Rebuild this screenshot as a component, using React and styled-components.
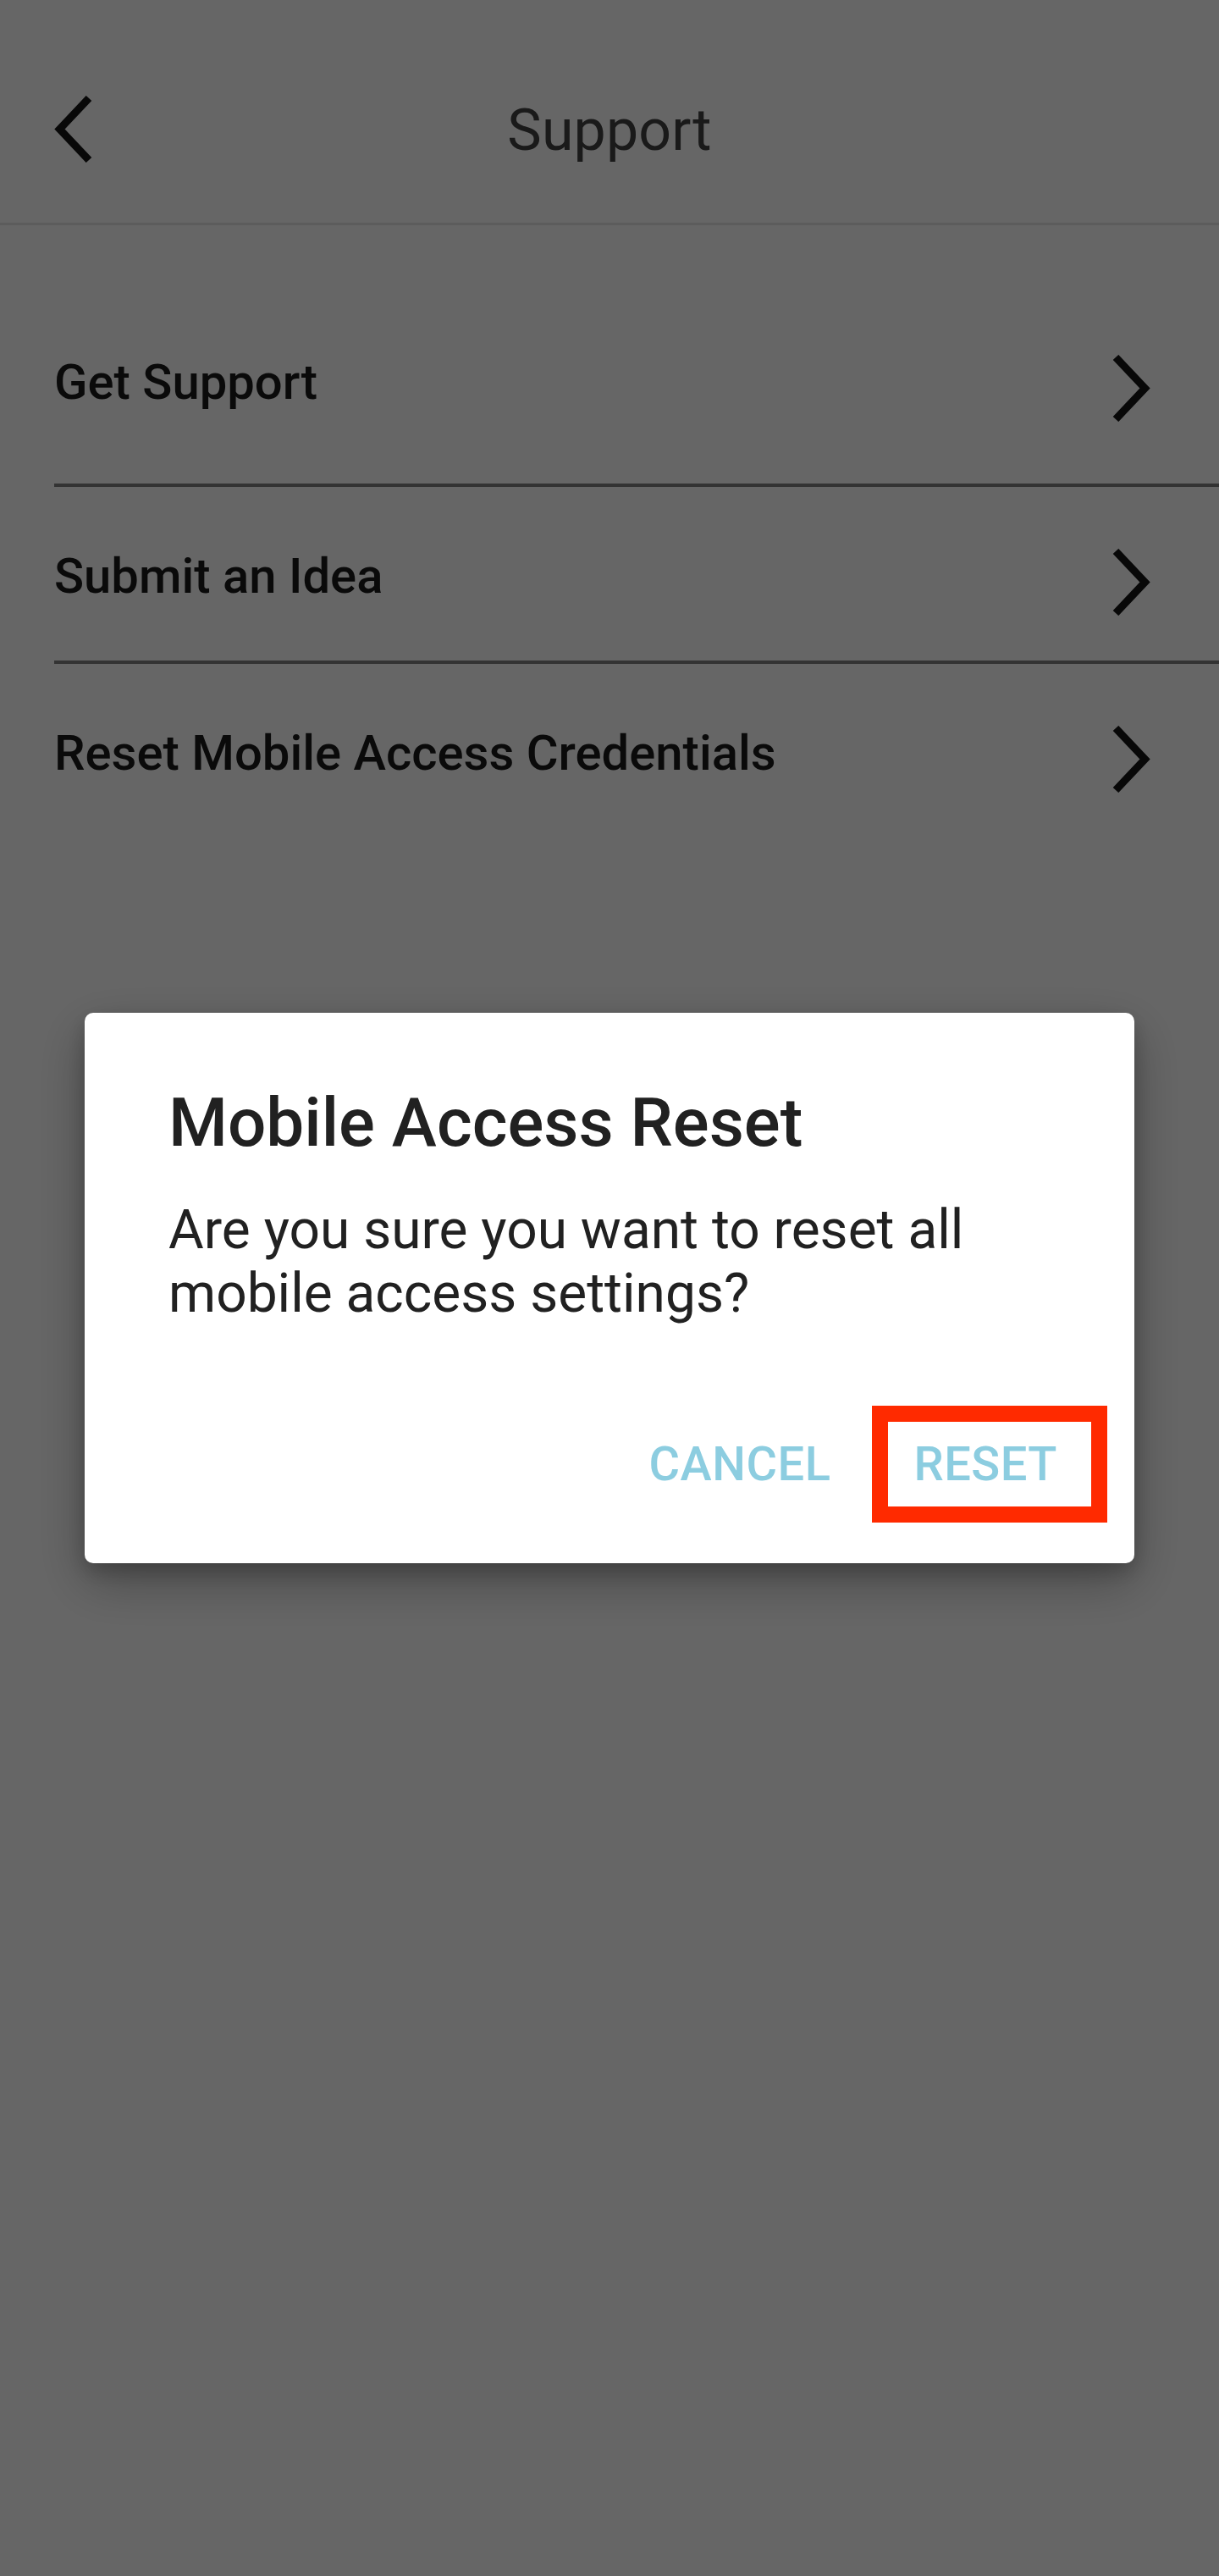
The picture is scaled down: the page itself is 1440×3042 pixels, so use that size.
import React from 'react';
import styled, {createGlobalStyle} from 'styled-components';

const GlobalStyle = createGlobalStyle`
  html, body {
    margin: 0;
    padding: 0;
    background: #ffffff;
  }
  body {
    font-family: Roboto, "Noto Sans", "Liberation Sans", sans-serif;
    -webkit-font-smoothing: antialiased;
  }
  #root {
    min-height: 100vh;
  }
`

const Page = styled.div`
  min-height: 100vh;
  background: #ffffff;
`

const Header = styled.header`
  position: relative;
  display: flex;
  align-items: center;
  justify-content: center;
  height: 266px;
  padding-top: 44px;
  box-sizing: border-box;
  border-bottom: 3px solid #e6e6e6;
`

const BackButton = styled.button`
  position: absolute;
  left: 64px;
  top: 113px;
  width: 46px;
  height: 79px;
  padding: 0;
  border: none;
  background: none;
  display: flex;
`

const Title = styled.h1`
  margin: 0;
  font-size: 68px;
  font-weight: 400;
  color: #414141;
  letter-spacing: 0.2px;
`

const List = styled.ul`
  list-style: none;
  margin: 0;
  padding: 80px 0 0;
`

const Row = styled.li`
  display: flex;
  align-items: center;
  justify-content: space-between;
  margin-left: 64px;
  padding: 73px 81px ${(props) => props.$bottom}px 0;
  border-bottom: ${(props) => (props.$last ? 'none' : '4px solid #808080')};
`

const RowLabel = styled.span`
  font-size: 58px;
  line-height: 58px;
  font-weight: 500;
  color: #1a1a1a;
  margin-bottom: 16px;
`

const Scrim = styled.div`
  position: fixed;
  inset: 0;
  background: rgba(0, 0, 0, 0.6);
  display: flex;
  align-items: center;
  justify-content: center;
`

const Dialog = styled.div`
  width: 1240px;
  height: 650px;
  box-sizing: border-box;
  background: #ffffff;
  border-radius: 10px;
  box-shadow: 0 22px 60px rgba(0, 0, 0, 0.3), 0 10px 24px rgba(0, 0, 0, 0.2);
  display: flex;
  flex-direction: column;
  padding: 82px 32px 48px 99px;
`

const DialogTitle = styled.h2`
  margin: 0;
  font-size: 80px;
  line-height: 96px;
  font-weight: 500;
  color: #212121;
`

const DialogText = styled.p`
  margin: 41px 0 0;
  font-size: 64px;
  line-height: 75px;
  font-weight: 400;
  color: #212121;
`

const Actions = styled.div`
  margin-top: auto;
  display: flex;
  justify-content: flex-end;
  align-items: center;
`

const TextButton = styled.button`
  display: flex;
  align-items: center;
  box-sizing: border-box;
  height: 138px;
  background: none;
  font-family: inherit;
  font-size: 56px;
  font-weight: 500;
  color: #8ccde0;
  letter-spacing: 0.5px;
  border: ${(props) => (props.$highlight ? '19px solid #ff2a00' : 'none')};
  padding: ${(props) => (props.$highlight ? '0 40px 0 30px' : '0')};
  margin-right: ${(props) => (props.$highlight ? '0' : '49px')};
`

const Chevron = ({flip}) => (
    <svg width="46" height="79" viewBox="0 0 46 79">
        <polyline
            points={flip ? "41,3 6.5,39.5 41,76" : "5,3 39.5,39.5 5,76"}
            fill="none"
            stroke="#161616"
            strokeWidth="9"
            strokeLinejoin="miter"
        />
    </svg>
);

const items = [
    {label: 'Get Support', bottom: 73},
    {label: 'Submit an Idea', bottom: 53},
    {label: 'Reset Mobile Access Credentials', bottom: 53},
];

export default function App() {
    return (
        <>
            <GlobalStyle/>
            <Page>
                <Header>
                    <BackButton aria-label="Back">
                        <Chevron flip/>
                    </BackButton>
                    <Title>Support</Title>
                </Header>
                <List>
                    {items.map((item, i) => (
                        <Row key={item.label} $bottom={item.bottom} $last={i === items.length - 1}>
                            <RowLabel>{item.label}</RowLabel>
                            <Chevron/>
                        </Row>
                    ))}
                </List>
            </Page>
            <Scrim>
                <Dialog role="dialog">
                    <DialogTitle>Mobile Access Reset</DialogTitle>
                    <DialogText>Are you sure you want to reset all mobile access settings?</DialogText>
                    <Actions>
                        <TextButton>CANCEL</TextButton>
                        <TextButton $highlight>RESET</TextButton>
                    </Actions>
                </Dialog>
            </Scrim>
        </>
    )
}
